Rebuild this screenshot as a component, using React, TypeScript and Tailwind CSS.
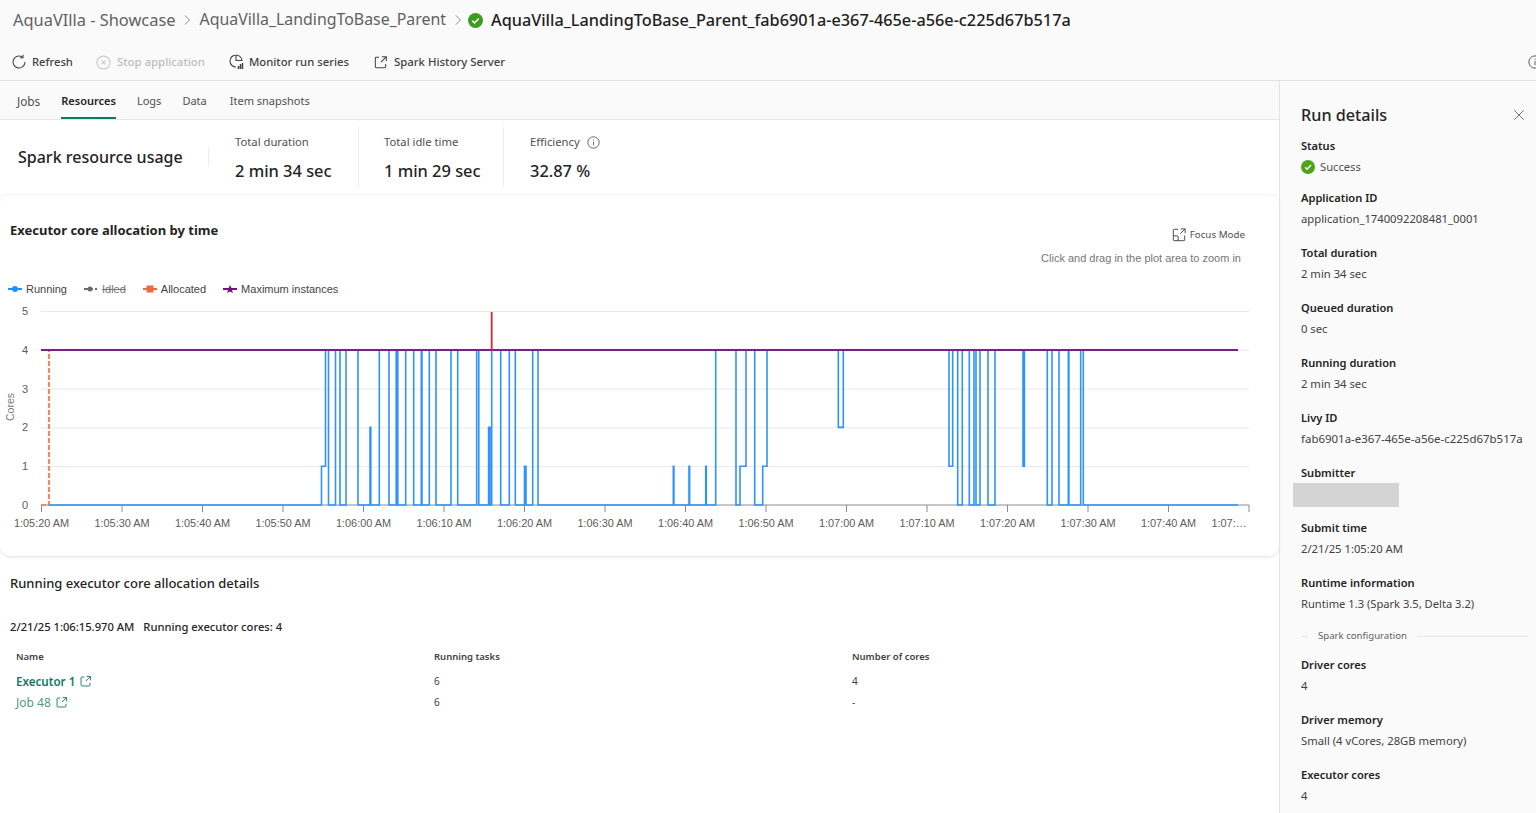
import { X } from "lucide-react";

const font = "font-['Noto_Sans','Open_Sans',sans-serif]";

// step points of the running line: [x, level]
const running: [number, number][] = [
  [41, 0], [321.5, 1], [325.5, 4], [328.5, 0], [335.5, 4], [340, 0], [346, 4], [358, 0], [370, 2], [370.8, 0],
  [379.3, 4], [389, 0], [396.2, 4], [397.8, 0], [405.7, 4], [413.7, 0], [421.3, 4], [422, 0], [429.3, 4], [436, 0],
  [451, 4], [457.7, 0], [476.7, 4], [478.8, 0], [488.6, 2], [490, 0], [491.7, 4], [500.7, 0], [509.3, 4], [515.3, 0],
  [524.5, 1], [526, 0], [532.7, 4], [538, 0], [673.3, 1], [673.9, 0], [689, 1], [689.6, 0], [705.7, 1], [706.3, 0],
  [715.7, 4], [736, 0], [740, 1], [746, 4], [754.7, 0], [762.7, 1], [767, 4], [838.3, 2], [843.3, 4], [949, 1],
  [952.7, 4], [957.7, 0], [962.3, 4], [969.3, 0], [974, 4], [976, 0], [980, 4], [988, 0], [995, 4], [1023, 1],
  [1024.4, 4], [1047.3, 0], [1052, 4], [1059, 0], [1068.3, 4], [1068.9, 0], [1080.7, 4], [1083.3, 0], [1238, 0],
];

const levelY = (l: number) => 505 - l * 38.8;

function stepPath() {
  let d = `M${running[0][0]} ${levelY(running[0][1])}`;
  for (let i = 1; i < running.length; i++) {
    d += `H${running[i][0]}V${levelY(running[i][1])}`;
  }
  return d;
}

const ticks = ["1:05:20 AM", "1:05:30 AM", "1:05:40 AM", "1:05:50 AM", "1:06:00 AM", "1:06:10 AM", "1:06:20 AM", "1:06:30 AM", "1:06:40 AM", "1:06:50 AM", "1:07:00 AM", "1:07:10 AM", "1:07:20 AM", "1:07:30 AM", "1:07:40 AM", "1:07:…"];

function CheckCircle({ size, color }: { size: number; color: string }) {
  return (
    <svg width={size} height={size} viewBox="0 0 16 16" className="shrink-0">
      <circle cx="8" cy="8" r="8" fill={color} />
      <path d="M4.6 8.3l2.3 2.3 4.5-4.8" fill="none" stroke="#fff" strokeWidth="1.7" />
    </svg>
  );
}

function OpenIcon({ size = 14, color = "#444" }: { size?: number; color?: string }) {
  return (
    <svg width={size} height={size} viewBox="0 0 16 16" fill="none" stroke={color} strokeWidth="1.1" className="shrink-0">
      <path d="M6.5 2.5H3.5a1 1 0 0 0-1 1v9a1 1 0 0 0 1 1h9a1 1 0 0 0 1-1v-3" />
      <path d="M9.5 1.8h4.7v4.7M14 2L8.5 7.5" />
    </svg>
  );
}

function FocusIcon() {
  return (
    <svg width="14" height="14" viewBox="0 0 16 16" fill="none" stroke="#444" strokeWidth="1.1" className="shrink-0">
      <path d="M7 1.500H2.500a1 1 0 0 0-1 1v11a1 1 0 0 0 1 1h11a1 1 0 0 0 1-1V8.500" />
      <path d="M10 1h5v5M14.800 1.200L9.500 6.500" />
      <path d="M1.500 9h4.500a1 1 0 0 1 1 1v4.500" />
    </svg>
  );
}

function InfoIcon({ size = 13 }: { size?: number }) {
  return (
    <svg width={size} height={size} viewBox="0 0 16 16" fill="none" stroke="#555" strokeWidth="1.1">
      <circle cx="8" cy="8" r="7" />
      <path d="M8 7v4.500M8 4.300v1.200" />
    </svg>
  );
}

function Chart() {
  return (
    <svg width="1280" height="254" viewBox="0 296 1280 254" className="block font-['Liberation_Sans',sans-serif]">
      {[5, 4, 3, 2, 1].map((l) => (
        <line key={l} x1="41" x2="1249" y1={levelY(l) + 0.5} y2={levelY(l) + 0.5} stroke="#e8e8e8" />
      ))}
      {[0, 1, 2, 3, 4, 5].map((l) => (
        <text key={l} x="25" y={levelY(l) + 4} fontSize="11" fill="#5c5c5c" textAnchor="middle">{l}</text>
      ))}
      <text transform="translate(14 407) rotate(-90)" fontSize="10.5" fill="#7a7a7a" textAnchor="middle">Cores</text>
      <line x1="41" x2="1249" y1="505" y2="505" stroke="#8c8c8c" />
      {ticks.map((t, i) => {
        const x = 41.5 + i * 80.5;
        return (
          <g key={t}>
            <line x1={x} x2={x} y1="505" y2="512" stroke="#8c8c8c" />
            <text x={i === 15 ? 1229 : x} y="527" fontSize="10.9" fill="#5c5c5c" textAnchor="middle">{t}</text>
          </g>
        );
      })}
      <path d="M41 505H49V350" fill="none" stroke="#f08a60" strokeWidth="2.2" strokeDasharray="5 2" />
      <path d={stepPath().replace("M41 505", "M49 505")} fill="none" stroke="#2f93fb" strokeWidth="1.6" />
      <line x1="41" x2="1238" y1="350" y2="350" stroke="#7b1f87" strokeWidth="2" />
      <line x1="491.7" x2="491.7" y1="312" y2="350" stroke="#f02030" strokeWidth="1.8" />
    </svg>
  );
}

function Legend() {
  const Item = ({ color, label, mark, strike }: { color: string; label: string; mark: string; strike?: boolean }) => (
    <div className="flex items-center gap-[4px]">
      <svg width="14" height="8" viewBox="0 0 14 8">
        <line x1="0" x2="14" y1="4" y2="4" stroke={color} strokeWidth="2" strokeDasharray={strike ? "9 2 2" : undefined} />
        {mark === "circle" && <circle cx="7" cy="4" r="3" fill={color} />}
        {mark === "diamond" && <circle cx="6" cy="4" r="2.5" fill={color} />}
        {mark === "square" && <rect x="3.5" y="0.5" width="7" height="7" fill={color} />}
        {mark === "star" && <path d="M7 0l1.400 3H12L9 5.200 10 8 7 6.400 4 8l1-2.800L2 3h3.600z" fill={color} />}
      </svg>
      <span className={strike ? "line-through text-[#777]" : "text-[#444]"}>{label}</span>
    </div>
  );
  return (
    <div className="flex items-center gap-[17px] h-[16px] mt-[1px] mb-[-1px] pl-[8px] font-['Liberation_Sans',sans-serif] text-[11px]">
      <Item color="#1f8fff" label="Running" mark="circle" />
      <Item color="#6b6b6b" label="Idled" mark="diamond" strike />
      <Item color="#ec6a3c" label="Allocated" mark="square" />
      <Item color="#75107f" label="Maximum instances" mark="star" />
    </div>
  );
}

function Field({ label, value, mt = "mt-[14px]", valueClass = "text-[11.25px]" }: { label: string; value: string; mt?: string; valueClass?: string }) {
  return (
    <div className={mt}>
      <div className="text-[11.1px] leading-[20px] font-semibold text-[#242424]">{label}</div>
      <div className={`${valueClass} leading-[21px] text-[#424242] whitespace-nowrap`}>{value}</div>
    </div>
  );
}

function Metric({ label, value, info, className }: { label: string; value: string; info?: boolean; className: string }) {
  return (
    <div className={`h-[60px] pt-[7px] flex flex-col gap-[10px] ${className}`}>
      <div className="flex items-center gap-[7px] text-[11.25px] leading-[16px] text-[#505050]">
        {label}
        {info && <InfoIcon />}
      </div>
      <div className="text-[16.4px] leading-[22px] font-medium text-[#242424]">{value}</div>
    </div>
  );
}

export default function App() {
  return (
    <div className={`${font} w-[1536px] h-[813px] overflow-hidden bg-[#fafafa] flex flex-col`}>
      <header className="h-[81px] shrink-0 border-b border-[#e3e3e3] relative">
        <div className="h-[40px] pl-[13px] flex items-center text-[16px] whitespace-nowrap text-[#616161]">
          <span className="text-[16.4px]">AquaVIlla - Showcase</span>
          <svg width="10" height="12" viewBox="0 0 10 12" fill="none" stroke="#8a8a8a" className="mx-[7px]"><path d="M3 1.500l4.500 4.500L3 10.500" /></svg>
          <span className="text-[15.9px]">AquaVilla_LandingToBase_Parent</span>
          <svg width="10" height="12" viewBox="0 0 10 12" fill="none" stroke="#8a8a8a" className="ml-[7px] mr-[5px]"><path d="M3 1.500l4.500 4.500L3 10.500" /></svg>
          <CheckCircle size={15} color="#3b9c1e" />
          <span className="ml-[8px] text-[16.28px] font-medium text-[#1f1f1f]">AquaVilla_LandingToBase_Parent_fab6901a-e367-465e-a56e-c225d67b517a</span>
        </div>
        <div className="mt-[2px] h-[40px] pl-[11px] flex items-center text-[11.2px] font-medium text-[#424242] whitespace-nowrap">
          <svg width="16" height="16" viewBox="0 0 16 16" fill="none" stroke="#444" strokeWidth="1.100"><path d="M14 8A6 6 0 1 1 11.500 3.100" /><path d="M12 .800v3h-3" /></svg>
          <span className="ml-[5px]">Refresh</span>
          <svg width="15" height="15" viewBox="0 0 16 16" fill="none" stroke="#c4c4c4" strokeWidth="1.100" className="ml-[23px]"><circle cx="8" cy="8" r="7" /><path d="M6 6l4 4M10 6l-4 4" /></svg>
          <span className="ml-[6px] text-[11.4px] text-[#bdbdbd]">Stop application</span>
          <svg width="16" height="16" viewBox="0 0 16 16" fill="none" stroke="#444" strokeWidth="1.100" className="ml-[23px]"><path d="M8 1a6 6 0 1 0 0 12M8 1v5.500h6A6 6 0 0 0 8 1" /><path d="M10.500 15v-3M12.500 15v-5M14.500 15V9" strokeWidth="1.500" /></svg>
          <span className="ml-[5px] text-[11.3px]">Monitor run series</span>
          <span className="ml-[24px]"><OpenIcon size={15} /></span>
          <span className="ml-[6px] text-[11.4px]">Spark History Server</span>
        </div>
        <span className="absolute left-[1528px] top-[55px]"><InfoIcon size={14} /></span>
      </header>

      <div className="flex-1 flex min-h-0">
        <main className="w-[1279px] shrink-0 flex flex-col">
          <nav className="h-[39px] shrink-0 border-b border-[#e6e6e6] pl-[17px] flex gap-[21px] text-[11px] text-[#505050]">
            <span className="leading-[40px] text-[11.8px]">Jobs</span>
            <span className="relative leading-[40px] font-semibold text-[#242424]">
              Resources
              <span className="absolute left-0 right-0 bottom-0 h-[2px] bg-[#117865]" />
            </span>
            <span className="leading-[40px]">Logs</span>
            <span className="leading-[40px]">Data</span>
            <span className="leading-[40px] ml-[2px]">Item snapshots</span>
          </nav>

          <div className="flex-1 bg-white flex flex-col min-h-0">
            <section className="h-[74px] shrink-0 flex items-center pl-[18px] shadow-[0_1px_2px_rgba(0,0,0,0.05)]">
              <div className="w-[191px] h-[18px] flex items-center border-r border-[#ececec] text-[16px] font-medium text-[#242424] whitespace-nowrap">Spark resource usage</div>
              <Metric label="Total duration" value="2 min 34 sec" className="w-[150px] pl-[26px] border-r border-[#ececec]" />
              <Metric label="Total idle time" value="1 min 29 sec" className="w-[145px] pl-[25px] border-r border-[#ececec]" />
              <Metric label="Efficiency" value="32.87 %" info className="pl-[26px]" />
            </section>

            <section className="h-[362px] shrink-0 rounded-[10px] shadow-[0_1px_3px_rgba(0,0,0,0.13)] flex flex-col overflow-hidden">
              <div className="h-[86px] shrink-0 flex justify-between pl-[10px] pr-[38px] pt-[27px]">
                <h2 className="text-[13px] leading-[18px] font-bold text-[#242424]">Executor core allocation by time</h2>
                <div className="flex flex-col items-end">
                  <div className="flex items-center gap-[4px] text-[9.8px] leading-[16px] text-[#505050] mt-[6px] mr-[-4px]">
                    <FocusIcon />
                    Focus Mode
                  </div>
                  <div className="mt-[7px] font-['Liberation_Sans',sans-serif] text-[11px] leading-[16px] text-[#777]">Click and drag in the plot area to zoom in</div>
                </div>
              </div>
              <Legend />
              <Chart />
            </section>

            <section className="pt-[17px] pl-[10px]">
              <h2 className="text-[13px] leading-[20px] font-medium text-[#242424]">Running executor core allocation details</h2>
              <div className="mt-[26px] flex gap-[9px] text-[11.2px] leading-[16px] font-medium text-[#242424]">
                <span>2/21/25 1:06:15.970 AM</span>
                <span>Running executor cores: 4</span>
              </div>
              <div className="mt-[13px] pl-[6px] grid grid-cols-[418px_418px_1fr] text-[9.5px] text-[#424242]">
                <div className="h-[23px] leading-[18px] font-semibold">Name</div>
                <div className="h-[23px] leading-[18px] font-semibold">Running tasks</div>
                <div className="h-[23px] leading-[18px] font-semibold">Number of cores</div>
                <div className="h-[21px] flex items-center gap-[4px] text-[11.6px] font-semibold text-[#117865]">Executor 1 <OpenIcon size={13} color="#117865" /></div>
                <div className="h-[21px] flex items-center text-[10px]">6</div>
                <div className="h-[21px] flex items-center text-[10px]">4</div>
                <div className="h-[21px] flex items-center gap-[4px] text-[12px] text-[#4f9a8c]">Job 48 <OpenIcon size={13} color="#117865" /></div>
                <div className="h-[21px] flex items-center text-[10px]">6</div>
                <div className="h-[21px] flex items-center text-[10px]">-</div>
              </div>
            </section>
          </div>
        </main>

        <aside className="flex-1 border-l border-[#e3e3e3] pl-[21px] pt-[22px] relative">
          <X size={18} strokeWidth={1.1} color="#555" className="absolute right-[8px] top-[25px]" />
          <h2 className="text-[16.2px] leading-[24px] font-medium text-[#242424]">Run details</h2>
          <div className="mt-[9px] text-[11.1px] leading-[20px] font-semibold text-[#242424]">Status</div>
          <div className="flex items-center gap-[5px] text-[11.2px] leading-[22px] text-[#505050]">
            <CheckCircle size={14} color="#4fa21a" />
            Success
          </div>
          <Field label="Application ID" value="application_1740092208481_0001" mt="mt-[10px]" />
          <Field label="Total duration" value="2 min 34 sec" />
          <Field label="Queued duration" value="0 sec" />
          <Field label="Running duration" value="2 min 34 sec" />
          <Field label="Livy ID" value="fab6901a-e367-465e-a56e-c225d67b517a" valueClass="text-[11.48px]" />
          <div className="mt-[14px] text-[11.1px] leading-[20px] font-semibold text-[#242424]">Submitter</div>
          <div className="ml-[-8px] w-[106px] h-[24px] bg-[#d4d4d4]" />
          <Field label="Submit time" value="2/21/25 1:05:20 AM" mt="mt-[11px]" />
          <Field label="Runtime information" value="Runtime 1.3 (Spark 3.5, Delta 3.2)" valueClass="text-[11.17px]" />
          <div className="mt-[14px] flex items-center gap-[10px] text-[9.6px] leading-[16px] text-[#616161]">
            <span className="w-[7px] h-px bg-[#e6e6e6]" />
            Spark configuration
            <span className="flex-1 mr-[8px] h-px bg-[#e6e6e6]" />
          </div>
          <Field label="Driver cores" value="4" mt="mt-[11px]" />
          <Field label="Driver memory" value="Small (4 vCores, 28GB memory)" />
          <Field label="Executor cores" value="4" />
        </aside>
      </div>
    </div>
  );
}
